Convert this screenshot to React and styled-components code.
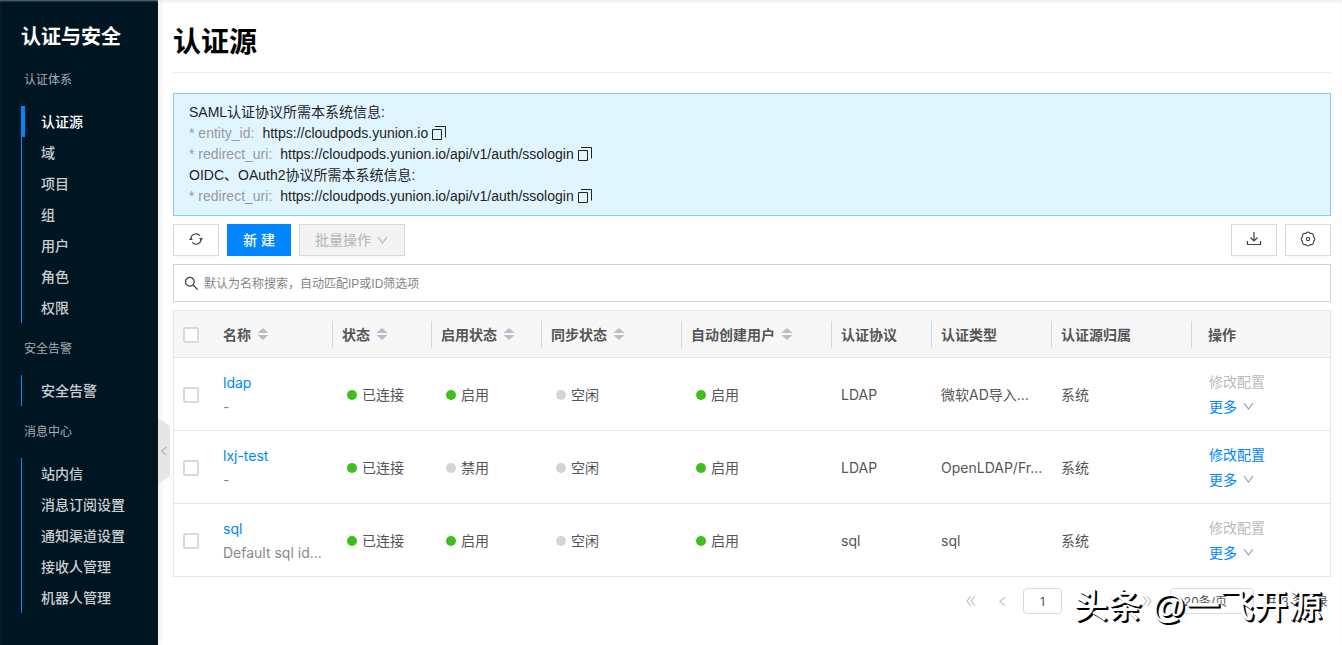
import React from "react";
import styled, { createGlobalStyle, css } from "styled-components";
import {
  AiOutlineDown,
  AiOutlineSearch,
  AiOutlineLeft,
  AiOutlineRight,
  AiOutlineDoubleLeft,
  AiOutlineDoubleRight,
} from "react-icons/ai";

const GlobalStyle = createGlobalStyle`
  * {
    box-sizing: border-box;
  }

  body {
    margin: 0;
    background: #fff;
    color: #222;
    font: 14px/21px "Liberation Sans", "Noto Sans CJK SC", sans-serif;
  }

  button,
  input,
  select {
    font: inherit;
  }

  a {
    text-decoration: none;
  }
`;

const Layout = styled.div`
  display: flex;
  min-height: 100vh;
  box-shadow: inset 0 3px 3px -1px rgba(0, 21, 41, 0.08);
`;

const Sidebar = styled.nav`
  flex: 0 0 158px;
  background: #001522;
  box-shadow: 2px 0 6px rgba(0, 21, 41, 0.08), inset 0 2px 2px -1px #6a767f;
`;

const SidebarTitle = styled.h2`
  margin: 0;
  padding: 20px 21px 0;
  color: #fff;
  font-size: 20px;
  font-weight: 700;
  line-height: 34px;
`;

const GroupLabel = styled.h3`
  margin: 0;
  padding-left: 24px;
  color: #a6adb4;
  font-size: 12px;
  font-weight: 400;
  line-height: 52px;
`;

const Menu = styled.ul`
  margin: 0 0 0 21px;
  padding: 0;
  list-style: none;
  box-shadow: inset 1px 0 #0a84ff;
`;

const MenuLink = styled.a`
  display: block;
  padding: 2px 0 0 16px;
  border-left: 4px solid ${(props) => (props.$active ? "#0086ff" : "transparent")};
  color: ${(props) => (props.$active ? "#fff" : "#cacdd0")};
  font-weight: 500;
  line-height: 29px;
`;

const Main = styled.main`
  position: relative;
  flex: 1;
  min-width: 0;
  padding: 0 11px 0 15px;
`;

const Collapse = styled.button`
  position: absolute;
  left: 0;
  top: 418px;
  display: flex;
  align-items: center;
  justify-content: center;
  width: 12px;
  height: 66px;
  padding: 0;
  border: 0;
  background: #e6e6e6;
  clip-path: polygon(0 0, 100% 8px, 100% 58px, 0 100%);
  color: #aaa;
  font-size: 12px;
`;

const PageTitle = styled.h1`
  margin: 0 0 20px;
  padding: 14px 0 0;
  border-bottom: 1px solid #eee;
  color: #000;
  font-size: 28px;
  font-weight: 700;
  line-height: 58px;
`;

const Info = styled.section`
  padding: 8px 15px;
  border: 1px solid #85cefa;
  background: #e1f5ff;

  p {
    display: flex;
    align-items: center;
    margin: 0;
  }
`;

const InfoKey = styled.span`
  margin-right: 8px;
  color: #999;
`;

const CopyButton = styled.button`
  display: flex;
  margin: 0 0 2px 4px;
  padding: 0;
  border: 0;
  background: none;
  color: #222;
`;

const Toolbar = styled.div`
  display: flex;
  gap: 8px;
  margin: 8px 0;
`;

const Button = styled.button`
  display: flex;
  align-items: center;
  justify-content: center;
  gap: 5px;
  height: 32px;
  padding: 0 15px;
  border: 1px solid #d9d9d9;
  background: #fff;
  color: #444;
  box-shadow: 0 2px 0 rgba(0, 0, 0, 0.02);

  ${(props) =>
    props.$primary &&
    css`
      border-color: #0086ff;
      background: #0086ff;
      color: #fff;
      font-weight: 500;
    `}

  &:disabled {
    background: #f3f3f3;
    color: #b5b5b5;
  }
`;

const IconButton = styled(Button)`
  width: 46px;
  padding: 0 0 2px;
`;

const Spacer = styled.div`
  flex: 1;
`;

const Search = styled.label`
  display: flex;
  align-items: center;
  gap: 4px;
  height: 38px;
  margin-bottom: 8px;
  padding: 0 9px;
  border: 1px solid #d3d3d3;
  color: #444;

  input {
    flex: 1;
    padding: 2px 0 0;
    border: 0;
    outline: 0;
    font-size: 12px;
  }

  input::placeholder {
    color: #858585;
  }
`;

const Table = styled.table`
  width: 100%;
  border: 1px solid #e4e6e9;
  border-spacing: 0;
  table-layout: fixed;
  color: #555;
  font-family: Inter, "Noto Sans CJK SC", sans-serif;

  th,
  td {
    padding: 0 5px 0 9px;
    overflow: hidden;
    text-align: left;
    text-overflow: ellipsis;
    white-space: nowrap;
  }

  th {
    height: 47px;
    border-bottom: 1px solid #e4e6e9;
    background: #f7f7f7;
    font-weight: 700;
  }

  td {
    height: 73px;
    border-bottom: 1px solid #e4e6e9;
  }

  tr:last-child td {
    height: 72px;
    border-bottom: 0;
  }

  th:last-child,
  td:last-child {
    padding-left: 16px;
  }
`;

const HeadCell = styled.div`
  display: flex;
  align-items: center;
  gap: 6px;
  height: 27px;
  margin-right: -5px;
  border-right: ${(props) => (props.$divided ? "1px solid #d5d8dc" : "0")};
`;

const SortIcon = styled.svg`
  width: 12px;
  height: 14px;
  fill: #b8bdc7;
`;

const Checkbox = styled.input`
  appearance: none;
  display: block;
  width: 16px;
  height: 16px;
  margin: 2px 0 0;
  border: 2px solid #d7dae2;
  border-radius: 2px;
  background: #fff;
`;

const Name = styled.div`
  padding-top: 1px;

  a {
    color: #0086ff;
  }

  p {
    margin: 3px 0 0;
    overflow: hidden;
    color: #888;
    text-overflow: ellipsis;
  }
`;

const Status = styled.span`
  display: flex;
  align-items: center;
  gap: 5px;
  padding-left: 5px;

  &::before {
    content: "";
    width: 10px;
    height: 10px;
    margin-top: 2px;
    border-radius: 50%;
    background: ${(props) => (props.$on ? "#3fbf1e" : "#d4d4d4")};
  }
`;

const Actions = styled.div`
  display: flex;
  flex-direction: column;
  align-items: flex-start;
  gap: 4px;
  padding-left: 1px;
`;

const LinkButton = styled.button`
  display: flex;
  align-items: center;
  gap: 5px;
  padding: 0;
  border: 0;
  background: none;
  color: #0086ff;

  &:disabled {
    color: #bbb;
  }

  svg {
    color: #999;
    font-size: 13px;
  }
`;

const Footer = styled.footer`
  position: relative;
  display: flex;
  align-items: center;
  justify-content: flex-end;
  margin-top: 11px;
  padding-right: 3px;
  color: #555;
  font-family: Inter, "Noto Sans CJK SC", sans-serif;
  font-size: 12px;
`;

const PageButton = styled.button`
  display: flex;
  align-items: center;
  justify-content: center;
  width: 32px;
  height: 26px;
  padding: 0;
  border: 0;
  background: none;
  color: #bbb;
`;

const CurrentPage = styled(PageButton)`
  width: 39px;
  margin: 0 37px 0 4px;
  border: 1px solid #d9dbe3;
  border-radius: 4px;
  color: #555;
`;

const PageSize = styled.select`
  appearance: none;
  width: 84px;
  height: 26px;
  margin: 0 12px 0 7px;
  padding: 0 13px;
  border: 1px solid #d9dbe3;
  border-radius: 4px;
  background: #fff;
  color: #555;
`;

const Watermark = styled.div`
  position: absolute;
  right: 9px;
  top: -6px;
  color: #fff;
  font: 500 34px/48px "Liberation Sans", "Noto Sans CJK SC", sans-serif;
  text-shadow: 1px 1px 0 #000, 2px 2px 0 #000;
  white-space: nowrap;
  pointer-events: none;
`;

const menuGroups = [
  { label: "认证体系", items: ["认证源", "域", "项目", "组", "用户", "角色", "权限"] },
  { label: "安全告警", items: ["安全告警"] },
  {
    label: "消息中心",
    items: ["站内信", "消息订阅设置", "通知渠道设置", "接收人管理", "机器人管理"],
  },
];

const columns = [
  { title: "名称", width: 119, sortable: true },
  { title: "状态", width: 99, sortable: true },
  { title: "启用状态", width: 110, sortable: true },
  { title: "同步状态", width: 140, sortable: true },
  { title: "自动创建用户", width: 150, sortable: true },
  { title: "认证协议", width: 100 },
  { title: "认证类型", width: 120 },
  { title: "认证源归属", width: 140 },
  { title: "操作" },
];

const sources = [
  { name: "ldap", desc: "-", enabled: true, protocol: "LDAP", type: "微软AD导入...", editable: false },
  { name: "lxj-test", desc: "-", enabled: false, protocol: "LDAP", type: "OpenLDAP/Fr...", editable: true },
  { name: "sql", desc: "Default sql id...", enabled: true, protocol: "sql", type: "sql", editable: false },
];

function SyncIcon() {
  return (
    <svg width="16" height="16" viewBox="0 0 16 16" fill="none" stroke="currentColor" strokeWidth="1.200">
      <path d="M3 8.500A5 5 0 0 1 11.800 4.700M13 7.500A5 5 0 0 1 4.200 11.300" />
      <path d="M1 9l2-2.500L5 9zM11 7l2 2.500L15 7z" fill="currentColor" stroke="none" />
    </svg>
  );
}

function DownloadIcon() {
  return (
    <svg width="16" height="16" viewBox="0 0 16 16" fill="none" stroke="currentColor" strokeWidth="1.200">
      <path d="M8 1v9M4.500 6.500L8 10l3.500-3.500M1.500 10v3.500h13V10" />
    </svg>
  );
}

function SettingIcon() {
  return (
    <svg width="16" height="16" viewBox="0 0 16 16" fill="none" stroke="currentColor" strokeWidth="1.100">
      <path d="M13.400 10.200A2.400 2.400 0 0 1 10.200 13.400A2.400 2.400 0 0 1 5.800 13.400A2.400 2.400 0 0 1 2.600 10.200A2.400 2.400 0 0 1 2.600 5.800A2.400 2.400 0 0 1 5.800 2.600A2.400 2.400 0 0 1 10.200 2.600A2.400 2.400 0 0 1 13.400 5.800A2.400 2.400 0 0 1 13.400 10.200z" />
      <rect x="6.500" y="6.500" width="3" height="3" rx="1" />
    </svg>
  );
}

function InfoLine({ label, value }) {
  return (
    <p>
      <InfoKey>* {label}:</InfoKey>
      {value}
      <CopyButton aria-label="复制">
        <svg width="14" height="14" viewBox="0 0 14 14" fill="none" stroke="currentColor">
          <path d="M.5 3.500h9v10h-9zM3 .5h10.500v11" />
        </svg>
      </CopyButton>
    </p>
  );
}

function SourceRow({ source }) {
  return (
    <tr>
      <td>
        <Checkbox type="checkbox" aria-label={source.name} />
      </td>
      <td>
        <Name>
          <a href="#detail">{source.name}</a>
          <p>{source.desc}</p>
        </Name>
      </td>
      <td>
        <Status $on>已连接</Status>
      </td>
      <td>
        <Status $on={source.enabled}>{source.enabled ? "启用" : "禁用"}</Status>
      </td>
      <td>
        <Status>空闲</Status>
      </td>
      <td>
        <Status $on>启用</Status>
      </td>
      <td>{source.protocol}</td>
      <td>{source.type}</td>
      <td>系统</td>
      <td>
        <Actions>
          <LinkButton disabled={!source.editable}>修改配置</LinkButton>
          <LinkButton>
            更多
            <AiOutlineDown />
          </LinkButton>
        </Actions>
      </td>
    </tr>
  );
}

const App = () => {
  return (
    <Layout>
      <GlobalStyle />
      <Sidebar>
        <SidebarTitle>认证与安全</SidebarTitle>
        {menuGroups.map((group, g) => (
          <React.Fragment key={group.label}>
            <GroupLabel>{group.label}</GroupLabel>
            <Menu>
              {group.items.map((item, i) => (
                <li key={item}>
                  <MenuLink href="#menu" $active={g === 0 && i === 0}>
                    {item}
                  </MenuLink>
                </li>
              ))}
            </Menu>
          </React.Fragment>
        ))}
      </Sidebar>
      <Main>
        <Collapse aria-label="收起菜单">
          <AiOutlineLeft />
        </Collapse>
        <PageTitle>认证源</PageTitle>
        <Info>
          <p>SAML认证协议所需本系统信息:</p>
          <InfoLine label="entity_id" value="https://cloudpods.yunion.io" />
          <InfoLine label="redirect_uri" value="https://cloudpods.yunion.io/api/v1/auth/ssologin" />
          <p>OIDC、OAuth2协议所需本系统信息:</p>
          <InfoLine label="redirect_uri" value="https://cloudpods.yunion.io/api/v1/auth/ssologin" />
        </Info>
        <Toolbar>
          <IconButton aria-label="刷新">
            <SyncIcon />
          </IconButton>
          <Button $primary>新 建</Button>
          <Button disabled>
            批量操作
            <AiOutlineDown size={13} />
          </Button>
          <Spacer />
          <IconButton aria-label="下载">
            <DownloadIcon />
          </IconButton>
          <IconButton aria-label="设置">
            <SettingIcon />
          </IconButton>
        </Toolbar>
        <Search>
          <AiOutlineSearch size={17} />
          <input aria-label="搜索" placeholder="默认为名称搜索，自动匹配IP或ID筛选项" />
        </Search>
        <Table>
          <colgroup>
            <col width="40" />
            {columns.map((column) => (
              <col key={column.title} width={column.width} />
            ))}
          </colgroup>
          <thead>
            <tr>
              <th>
                <Checkbox type="checkbox" aria-label="全选" />
              </th>
              {columns.map((column) => (
                <th key={column.title}>
                  <HeadCell $divided={Boolean(column.width)}>
                    {column.title}
                    {column.sortable && (
                      <SortIcon viewBox="0 0 12 14">
                        <path d="M6 1l5.500 5H.5zM6 13l5.500-5H.5z" />
                      </SortIcon>
                    )}
                  </HeadCell>
                </th>
              ))}
            </tr>
          </thead>
          <tbody>
            {sources.map((source) => (
              <SourceRow key={source.name} source={source} />
            ))}
          </tbody>
        </Table>
        <Footer>
          <PageButton aria-label="首页">
            <AiOutlineDoubleLeft size={14} />
          </PageButton>
          <PageButton aria-label="上一页">
            <AiOutlineLeft size={13} />
          </PageButton>
          <CurrentPage>1</CurrentPage>
          <PageButton aria-label="下一页">
            <AiOutlineRight size={13} />
          </PageButton>
          <PageButton aria-label="末页">
            <AiOutlineDoubleRight size={14} />
          </PageButton>
          <PageSize aria-label="每页条数">
            <option>20条/页</option>
          </PageSize>
          <span>共 3 条记录</span>
          <Watermark>头条 @一飞开源</Watermark>
        </Footer>
      </Main>
    </Layout>
  );
};

export default App;
